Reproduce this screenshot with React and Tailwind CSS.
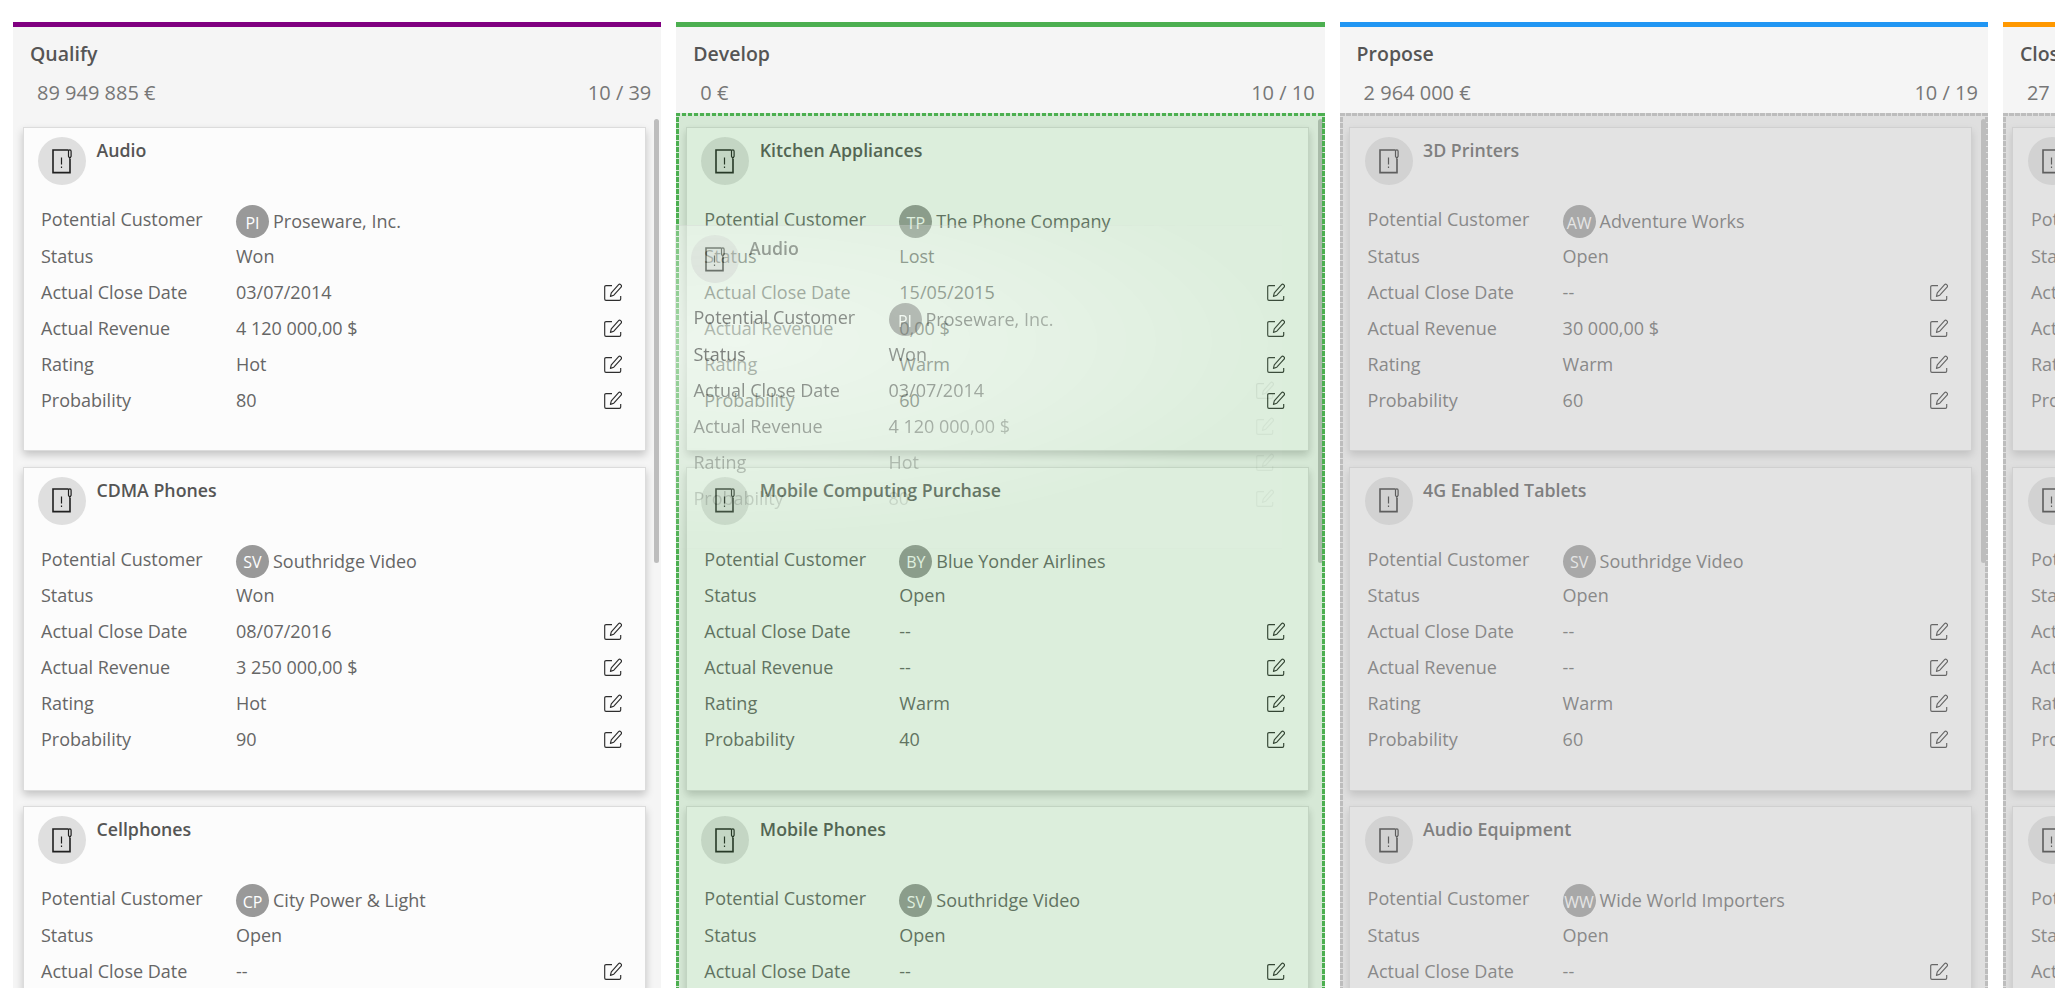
const FONT = "font-['Open_Sans','Noto_Sans',sans-serif]";

function FileIcon() {
  return (
    <svg width="20" height="25" viewBox="0 0 20 25" fill="none" className="block">
      <path d="M16.5 1H1v22.6h17V10" stroke="#1f1f1f" strokeWidth="1.6" />
      <path d="M16.5 2.2a1.2 1.2 0 0 1 2.6 0v5.2l-1.3 2-1.3-2z" stroke="#1f1f1f" strokeWidth="1.2" fill="none" />
      <path d="M9.5 8.5v7M9.5 17.5v1.6" stroke="#1f1f1f" strokeWidth="1.2" />
    </svg>
  );
}

function EditIcon() {
  return (
    <svg width="18" height="18" viewBox="0 0 18 18" fill="none" className="block">
      <path d="M8 2.6H2a1.3 1.3 0 0 0-1.3 1.3V16a1.3 1.3 0 0 0 1.3 1.3h13.4a1.3 1.3 0 0 0 1.3-1.3v-3" stroke="#2e2e2e" strokeWidth="1.15" />
      <path d="M6.4 13.4l.9-3.6L14.6 1.6a1.4 1.4 0 0 1 2 0l.5.5a1.4 1.4 0 0 1 0 2L9.8 12.2z" stroke="#2e2e2e" strokeWidth="1.15" strokeLinejoin="round" />
    </svg>
  );
}

function Row({ label, value }) {
  return (
    <div className="flex h-9 items-center">
      <div className="w-[195px] shrink-0 text-[#666]">{label}</div>
      <div className="flex-1 text-[#666]">{value}</div>
      <div className="mb-[1px] mr-[9px]"><EditIcon /></div>
    </div>
  );
}

function Card({ d, ghost }) {
  return (
    <div className={`h-[324px] w-[623px] shrink-0 border border-[#dcdcdc] pl-[14.5px] pt-[9px] ${ghost ? "bg-white/60" : "mb-[15.5px] bg-[#fcfcfc] shadow-[0_4px_8px_rgba(0,0,0,0.2)]"}`}>
      <div className="flex h-12 items-start">
        <div className="flex h-12 w-12 shrink-0 items-center justify-center rounded-full bg-[#dfdfdf]"><FileIcon /></div>
        <div className="ml-[10.5px] text-[17.75px] font-semibold leading-[26px] text-[#555]">{d.title}</div>
      </div>
      <div className="mt-5 pl-[3px] pr-[14px]">
        <div className="flex h-[33px]">
          <div className="w-[195px] shrink-0 pt-[1px] leading-[26px] text-[#666]">Potential Customer</div>
          <div className="flex items-center text-[#666]">
            <div className="flex h-[33px] w-[33px] items-center justify-center rounded-full bg-[#999] pt-[2px] text-[16px] text-white">{d.initials}</div>
            <span className="ml-1">{d.customer}</span>
          </div>
        </div>
        <div className="flex h-9 items-center">
          <div className="w-[195px] shrink-0 text-[#666]">Status</div>
          <div className="text-[#666]">{d.status}</div>
        </div>
        <Row label="Actual Close Date" value={d.close} />
        <Row label="Actual Revenue" value={d.revenue} />
        <Row label="Rating" value={d.rating} />
        <Row label="Probability" value={d.probability} />
      </div>
    </div>
  );
}

const columns = [
  {
    name: "Qualify", amount: "89 949 885 €", count: "10 / 39", bar: "border-[#800080]",
    cards: [
      { title: "Audio", initials: "PI", customer: "Proseware, Inc.", status: "Won", close: "03/07/2014", revenue: "4 120 000,00 $", rating: "Hot", probability: "80" },
      { title: "CDMA Phones", initials: "SV", customer: "Southridge Video", status: "Won", close: "08/07/2016", revenue: "3 250 000,00 $", rating: "Hot", probability: "90" },
      { title: "Cellphones", initials: "CP", customer: "City Power & Light", status: "Open", close: "--", revenue: "--", rating: "Warm", probability: "40" },
    ],
  },
  {
    name: "Develop", amount: "0 €", count: "10 / 10", bar: "border-[#4caf50]", drop: "green",
    cards: [
      { title: "Kitchen Appliances", initials: "TP", customer: "The Phone Company", status: "Lost", close: "15/05/2015", revenue: "0,00 $", rating: "Warm", probability: "60" },
      { title: "Mobile Computing Purchase", initials: "BY", customer: "Blue Yonder Airlines", status: "Open", close: "--", revenue: "--", rating: "Warm", probability: "40" },
      { title: "Mobile Phones", initials: "SV", customer: "Southridge Video", status: "Open", close: "--", revenue: "--", rating: "Warm", probability: "40" },
    ],
  },
  {
    name: "Propose", amount: "2 964 000 €", count: "10 / 19", bar: "border-[#2196f3]", drop: "gray",
    cards: [
      { title: "3D Printers", initials: "AW", customer: "Adventure Works", status: "Open", close: "--", revenue: "30 000,00 $", rating: "Warm", probability: "60" },
      { title: "4G Enabled Tablets", initials: "SV", customer: "Southridge Video", status: "Open", close: "--", revenue: "--", rating: "Warm", probability: "60" },
      { title: "Audio Equipment", initials: "WW", customer: "Wide World Importers", status: "Open", close: "--", revenue: "--", rating: "Warm", probability: "60" },
    ],
  },
  {
    name: "Close", amount: "27 000 000 €", count: "10 / 27", bar: "border-[#ff9800]", drop: "gray",
    cards: [
      { title: "Headphones", initials: "AW", customer: "Adventure Works", status: "Open", close: "--", revenue: "--", rating: "Warm", probability: "60" },
      { title: "Speakers", initials: "SV", customer: "Southridge Video", status: "Open", close: "--", revenue: "--", rating: "Warm", probability: "60" },
      { title: "Televisions", initials: "WW", customer: "Wide World Importers", status: "Open", close: "--", revenue: "--", rating: "Warm", probability: "60" },
    ],
  },
];

function Column({ c }) {
  return (
    <div className={`flex h-full w-[648.3px] shrink-0 flex-col border-t-[5px] bg-[#f5f5f5] ${c.bar}`}>
      <div className="h-[86px] shrink-0">
        <div className="pl-[17px] pt-[13px] text-[19.5px] font-semibold leading-[28px] text-[#555]">{c.name}</div>
        <div className="mt-[12px] flex justify-between pl-[24px] pr-[10px] text-[20px] leading-[26px] text-[#777]">
          <span>{c.amount}</span>
          <span>{c.count}</span>
        </div>
      </div>
      <div className="relative min-h-0 flex-1 overflow-hidden pl-[9.5px] pt-[14px]">
        {c.cards.map((d) => <Card key={d.title} d={d} />)}
        <div className="absolute right-[2px] top-[6px] h-[444px] w-[5px] rounded-full bg-[#bdbdbd]" />
        {c.drop === "green" && (
          <div className="absolute inset-x-0 top-0 -bottom-2.5 bg-[rgba(76,175,80,0.18)] [background-image:repeating-linear-gradient(90deg,#4caf50_0_4.6px,transparent_4.6px_6px),repeating-linear-gradient(90deg,#4caf50_0_4.6px,transparent_4.6px_6px),repeating-linear-gradient(0deg,#4caf50_0_4.6px,transparent_4.6px_6px),repeating-linear-gradient(0deg,#4caf50_0_4.6px,transparent_4.6px_6px)] [background-position:top,bottom,left,right] [background-size:100%_3px,100%_3px,3px_100%,3px_100%] bg-no-repeat" />
        )}
        {c.drop === "gray" && (
          <div className="absolute inset-x-0 top-0 -bottom-2.5 bg-[rgba(189,189,189,0.4)] [background-image:repeating-linear-gradient(90deg,#bdbdbd_0_4.6px,transparent_4.6px_6px),repeating-linear-gradient(90deg,#bdbdbd_0_4.6px,transparent_4.6px_6px),repeating-linear-gradient(0deg,#bdbdbd_0_4.6px,transparent_4.6px_6px),repeating-linear-gradient(0deg,#bdbdbd_0_4.6px,transparent_4.6px_6px)] [background-position:top,bottom,left,right] [background-size:100%_3px,100%_3px,3px_100%,3px_100%] bg-no-repeat" />
        )}
      </div>
    </div>
  );
}

export default function App() {
  return (
    <div className={`relative h-[988px] overflow-hidden bg-white text-[18px] ${FONT}`}>
      <div className="flex h-full gap-[15px] pl-[13px] pt-[22px]">
        {columns.map((c) => <Column key={c.name} c={c} />)}
      </div>
      <div className="absolute left-[675px] top-[225px] h-[324px] w-[607px] overflow-hidden [mask-image:radial-gradient(ellipse_560px_200px_at_10%_36%,rgba(0,0,0,0.85)_0%,rgba(0,0,0,0.5)_50%,rgba(0,0,0,0.05)_100%)]">
        <Card d={columns[0].cards[0]} ghost />
      </div>
    </div>
  );
}
